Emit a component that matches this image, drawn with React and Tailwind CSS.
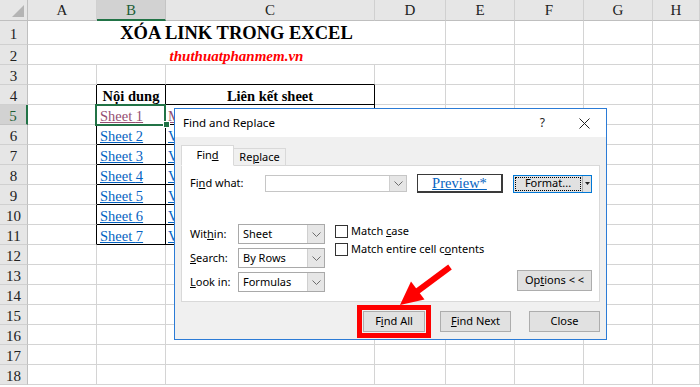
import React from "react";

const LETTERS = ["A", "B", "C", "D", "E", "F", "G", "H"];

function borderCls(r, c) {
  const inTable = r >= 4 && r <= 11 && (c === 1 || c === 2);
  if (inTable) return "border-r border-b border-black";
  if (r >= 4 && r <= 11 && c === 0) return "border-r border-b border-[#d4d4d4] border-r-black";
  if (r === 3 && (c === 1 || c === 2)) return "border-r border-b border-[#d4d4d4] border-b-black";
  return "border-r border-b border-[#d4d4d4]";
}

function cellContent(r, c) {
  if (r === 4 && c === 1)
    return <div className="w-full text-center font-bold">Nội dung</div>;
  if (r === 4 && c === 2)
    return <div className="w-full text-center font-bold">Liên kết sheet</div>;
  if (r >= 5 && r <= 11 && c === 1) {
    const visited = r === 5;
    return (
      <div className={visited ? "pl-[3px] underline text-[#954f72]" : "pl-[3px] underline text-[#0563c1]"}>
        Sheet {r - 4}
      </div>
    );
  }
  if (r >= 5 && r <= 11 && c === 2) {
    const visited = r === 5;
    return (
      <div className={visited ? "pl-[2px] underline text-[#954f72]" : "pl-[2px] underline text-[#0563c1]"}>
        {visited ? "Mở Sheet 1" : "Vào Sheet " + (r - 4)}
      </div>
    );
  }
  return null;
}

function Sheet() {
  const cells = [];
  cells.push(
    <div key="corner" className="relative h-[21px] bg-[#e6e6e6] border-r border-b border-[#bfbfbf]">
      <svg className="absolute right-[3px] bottom-[3px]" width="12" height="12" viewBox="0 0 12 12">
        <polygon points="12,0 12,12 0,12" fill="#b4b4b4" />
      </svg>
    </div>
  );
  LETTERS.forEach((L, i) => {
    const sel = i === 1;
    cells.push(
      <div
        key={"h" + L}
        className={
          sel
            ? "h-[21px] pt-px flex items-center justify-center bg-[#d2d2d2] border-r border-[#c4c4c4] border-b-2 border-b-[#217346] text-[#1d5e36] text-[15px]"
            : "h-[21px] pt-px flex items-center justify-center bg-[#e6e6e6] border-r border-[#d0d0d0] border-b border-b-[#bfbfbf] text-[15px] text-[#222]"
        }
      >
        {L}
      </div>
    );
  });

  for (let r = 1; r <= 18; r++) {
    const h = r === 1 ? "h-[24px]" : "h-[20px]";
    const sel = r === 5;
    cells.push(
      <div
        key={"r" + r}
        className={
          (sel
            ? "flex items-center justify-center pt-[3px] bg-[#d2d2d2] border-r-2 border-r-[#217346] border-b border-b-[#c4c4c4] text-[#1d5e36] text-[15px] "
            : "flex items-center justify-center pt-[3px] bg-[#e6e6e6] border-r border-r-[#bfbfbf] border-b border-b-[#d0d0d0] text-[15px] text-[#222] ") + h
        }
      >
        {r}
      </div>
    );
    if (r <= 2) {
      cells.push(
        <div
          key={"m" + r}
          className={"col-span-4 border-r border-b border-[#d4d4d4] flex justify-center " + h + (r === 1 ? " items-center" : " items-end")}
        >
          {r === 1 ? (
            <span className="font-bold text-[18.5px] leading-none text-black pt-[2px]">XÓA LINK TRONG EXCEL</span>
          ) : (
            <span className="font-bold italic text-[15px] leading-[15px] text-[#ff0000]">thuthuatphanmem.vn</span>
          )}
        </div>
      );
      for (let c = 4; c < 8; c++) {
        cells.push(<div key={r + "-" + c} className={"border-r border-b border-[#d4d4d4] " + h} />);
      }
    } else {
      for (let c = 0; c < 8; c++) {
        const isSel = r === 5 && c === 1;
        cells.push(
          <div
            key={r + "-" + c}
            className={
              borderCls(r, c) +
              " " +
              h +
              " flex items-end whitespace-nowrap text-[14.5px] leading-[15px]" +
              (isSel ? " relative overflow-visible" : " overflow-hidden")
            }
          >
            {cellContent(r, c)}
            {isSel && (
              <>
                <div className="absolute -left-[2px] -top-[1px] w-[71px] h-[22px] border-2 border-[#217346] pointer-events-none" />
                <div className="absolute -right-[5px] -bottom-[4px] w-[7px] h-[7px] bg-[#217346] border border-white z-10" />
              </>
            )}
          </div>
        );
      }
    }
  }

  return (
    <div className="grid grid-cols-[28px_69px_69px_209px_71px_69px_69px_69px_47px] font-['Liberation_Serif',serif] text-black">
      {cells}
    </div>
  );
}

function Chevron() {
  return (
    <svg width="9" height="5" viewBox="0 0 9 5">
      <polyline points="0.5,0.5 4.5,4.5 8.5,0.5" fill="none" stroke="#6d6d6d" strokeWidth="1" />
    </svg>
  );
}

function Combo({ text, w, h, border }) {
  return (
    <div className={"flex bg-white border " + border + " " + w + " " + h}>
      <div className="flex-1 flex items-center pl-[4px] text-[11px] text-black">{text}</div>
      <div className="w-[17px] flex items-center justify-center bg-[#e6e6e6] border-l border-[#cfcfcf]">
        <Chevron />
      </div>
    </div>
  );
}

function Btn({ w, children }) {
  return (
    <div className={"h-[21px] flex items-center justify-center bg-[#e1e1e1] border border-[#adadad] text-[11px] text-black " + w}>
      {children}
    </div>
  );
}

function Dialog() {
  return (
    <div className="absolute left-[174px] top-[108px] w-[433px] h-[232px] border border-[#2b7bd6] bg-[#f0f0f0] flex flex-col font-['Noto_Sans',sans-serif] text-[11px] text-black">
      <div className="h-[28px] shrink-0 bg-white flex items-center pl-[8px]">
        <span className="text-[11.5px]">Find and Replace</span>
        <span className="ml-auto text-[12px] text-[#222]">?</span>
        <svg className="ml-[34px] mr-[16px]" width="11" height="11" viewBox="0 0 11 11">
          <path d="M0.5 0.5 L10.5 10.5 M10.5 0.5 L0.5 10.5" stroke="#222" strokeWidth="1" />
        </svg>
      </div>
      <div className="flex flex-col px-[6px] pt-[8px]">
        <div className="relative z-10 flex items-end h-[20px]">
          <div className="w-[53px] h-[21px] -mb-px bg-white border border-[#d9d9d9] border-b-white flex items-center justify-center">
            Fin<u>d</u>
          </div>
          <div className="w-[53px] h-[17px] -ml-px bg-[#f0f0f0] border border-[#d9d9d9] border-b-0 flex items-center justify-center">
            Re<u>p</u>lace
          </div>
        </div>
        <div className="h-[137px] bg-white border border-[#d9d9d9] flex flex-col">
          <div className="flex items-center mt-[8px] h-[19px]">
            <div className="w-[83px] pl-[8px]">
              Fi<u>n</u>d what:
            </div>
            <Combo text="" w="w-[142px]" h="h-[17px]" border="border-[#c6c6c6]" />
            <div className="ml-[10px] w-[86px] h-[19px] border border-[#3a3a3a] border-r-2 border-b-2 flex items-center justify-center font-['Liberation_Serif',serif] text-[14.5px] leading-none text-[#0563c1] underline">
              Preview*
            </div>
            <div className="ml-[10px] w-[79px] h-[18px] border border-[#0078d7] bg-[#e1e1e1] flex">
              <div className="flex-1 m-px border border-dotted border-black flex items-center justify-center">
                Format...
              </div>
              <div className="w-[9px] border-l border-[#adadad] flex items-center justify-center">
                <svg width="5" height="3" viewBox="0 0 5 3">
                  <polygon points="0,0 5,0 2.5,3" fill="#222" />
                </svg>
              </div>
            </div>
          </div>
          <div className="flex mt-[31px]">
            <div className="flex flex-col gap-[4px]">
              <div className="flex items-center">
                <div className="w-[56px] pl-[8px]">
                  Wit<u>h</u>in:
                </div>
                <Combo text="Sheet" w="w-[87px]" h="h-[20px]" border="border-[#a9a9a9]" />
              </div>
              <div className="flex items-center">
                <div className="w-[56px] pl-[8px]">
                  <u>S</u>earch:
                </div>
                <Combo text="By Rows" w="w-[87px]" h="h-[20px]" border="border-[#a9a9a9]" />
              </div>
              <div className="flex items-center">
                <div className="w-[56px] pl-[8px]">
                  <u>L</u>ook in:
                </div>
                <Combo text="Formulas" w="w-[87px]" h="h-[20px]" border="border-[#a9a9a9]" />
              </div>
            </div>
            <div className="ml-[10px] flex flex-col gap-[5px] pt-[1px]">
              <div className="flex items-center h-[13px]">
                <div className="w-[13px] h-[13px] border border-[#333] bg-white" />
                <span className="ml-[3px]">
                  Match <u>c</u>ase
                </span>
              </div>
              <div className="flex items-center h-[13px]">
                <div className="w-[13px] h-[13px] border border-[#333] bg-white" />
                <span className="ml-[3px]">
                  Match entire cell c<u>o</u>ntents
                </span>
              </div>
            </div>
            <div className="ml-auto mr-[7px] self-end mb-px">
              <Btn w="w-[75px]">
                Op<u>t</u>ions&nbsp;&lt;&nbsp;&lt;
              </Btn>
            </div>
          </div>
        </div>
        <div className="flex items-center justify-end mt-[3px]">
          <div className="border-[5px] border-[#ff0000] p-px">
            <Btn w="w-[62px]">
              F<u>i</u>nd All
            </Btn>
          </div>
          <div className="ml-[9px]">
            <Btn w="w-[71px]">
              <u>F</u>ind Next
            </Btn>
          </div>
          <div className="ml-[18px]">
            <Btn w="w-[71px]">Close</Btn>
          </div>
        </div>
      </div>
    </div>
  );
}

function Arrow() {
  return (
    <svg className="absolute left-0 top-0 pointer-events-none" width="700" height="387" viewBox="0 0 700 387">
      <line x1="450" y1="267" x2="415" y2="293" stroke="#ff0000" strokeWidth="6" />
      <polygon points="400,305 424.5,299.5 411,281.5" fill="#ff0000" />
    </svg>
  );
}

export default function App() {
  return (
    <div className="relative w-[700px] h-[387px] overflow-hidden bg-white">
      <Sheet />
      <Dialog />
      <Arrow />
    </div>
  );
}
